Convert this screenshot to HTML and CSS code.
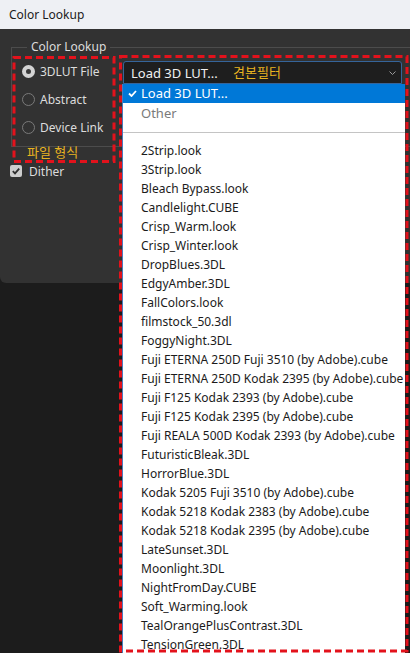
FILE: index.html
```html
<!DOCTYPE html>
<html lang="ko">
<head>
    <meta charset="UTF-8">
    <title>Color Lookup</title>
    <link rel="stylesheet" href="styles.css">
</head>
<body>
    <div class="titlebar">Color Lookup</div>

    <div class="dialog">
        <fieldset class="group">
            <legend>Color Lookup</legend>
            <div class="group-body">
                <div class="radios">
                    <label class="radio on"><span class="dot"></span>3DLUT File</label>
                    <label class="radio"><span class="dot"></span>Abstract</label>
                    <label class="radio"><span class="dot"></span>Device Link</label>
                </div>
                <div class="combo-wrap">
                    <div class="combo">
                        <span>Load 3D LUT...</span>
                        <svg class="chevron" width="7" height="4" viewBox="0 0 7 4"><polyline points="0.5,0.5 3.5,3.5 6.5,0.5" fill="none" stroke="#9a9a9a" stroke-width="1"/></svg>
                    </div>
                    <ul class="popup">
                        <li class="sel">
                            <svg class="tick" width="9" height="7" viewBox="0 0 9 7"><polyline points="1,3.5 3.5,6 8,1" fill="none" stroke="#fff" stroke-width="1.8"/></svg>
                            Load 3D LUT...
                        </li>
                        <li class="muted">Other</li>
                        <li class="sep"></li>
                        <li>2Strip.look</li>
                        <li>3Strip.look</li>
                        <li>Bleach Bypass.look</li>
                        <li>Candlelight.CUBE</li>
                        <li>Crisp_Warm.look</li>
                        <li>Crisp_Winter.look</li>
                        <li>DropBlues.3DL</li>
                        <li>EdgyAmber.3DL</li>
                        <li>FallColors.look</li>
                        <li>filmstock_50.3dl</li>
                        <li>FoggyNight.3DL</li>
                        <li>Fuji ETERNA 250D Fuji 3510 (by Adobe).cube</li>
                        <li>Fuji ETERNA 250D Kodak 2395 (by Adobe).cube</li>
                        <li>Fuji F125 Kodak 2393 (by Adobe).cube</li>
                        <li>Fuji F125 Kodak 2395 (by Adobe).cube</li>
                        <li>Fuji REALA 500D Kodak 2393 (by Adobe).cube</li>
                        <li>FuturisticBleak.3DL</li>
                        <li>HorrorBlue.3DL</li>
                        <li>Kodak 5205 Fuji 3510 (by Adobe).cube</li>
                        <li>Kodak 5218 Kodak 2383 (by Adobe).cube</li>
                        <li>Kodak 5218 Kodak 2395 (by Adobe).cube</li>
                        <li>LateSunset.3DL</li>
                        <li>Moonlight.3DL</li>
                        <li>NightFromDay.CUBE</li>
                        <li>Soft_Warming.look</li>
                        <li>TealOrangePlusContrast.3DL</li>
                        <li>TensionGreen.3DL</li>
                    </ul>
                </div>
            </div>
        </fieldset>

        <div class="check-row">
            <span class="checkbox"><svg width="12" height="12" viewBox="0 0 12 12"><polyline points="2.8,6.2 5,8.4 9.2,3.6" fill="none" stroke="#2e2e2e" stroke-width="1.8"/></svg></span>
            Dither
        </div>
    </div>

    <!-- 빨간 점선 표시 -->
    <svg class="marks" width="410" height="653" viewBox="0 0 410 653">
        <rect x="14" y="57.5" width="100" height="104" />
        <rect x="120.5" y="56.5" width="286.5" height="594.5" />
    </svg>
    <span class="note note-format">파일 형식</span>
    <span class="note note-filter">견본필터</span>
</body>
</html>
```

FILE: styles.css
```css
*{
    margin: 0;
    padding: 0;
    box-sizing: border-box;
}
body{
    position: relative;
    width: 410px;
    height: 653px;
    overflow: hidden;
    background: #1c1c1c;
    font-family: "Noto Sans", "Noto Sans CJK KR", sans-serif;
    font-size: 12px;
}
.titlebar{
    height: 29px;
    line-height: 29px;
    padding-left: 9px;
    background: #eef0f4;
    color: #1b1b1b;
}
.dialog{
    height: 254px;
    padding-top: 10px;
    background: #323232;
    border-bottom-left-radius: 6px;
    color: #dcdcdc;
}
.group{
    margin-left: 11px;
    border: 1px solid #4c4c4c;
    border-right: none;
    padding: 0 0 5px 0;
}
.group legend{
    margin-left: 15px;
    padding: 0 4px;
    line-height: 16px;
}
.group-body{
    display: flex;
    align-items: flex-start;
    padding-top: 2px;
}
.radios{
    width: 111px;
    padding-left: 10px;
}
.radio{
    display: flex;
    align-items: center;
    gap: 5px;
    height: 28px;
}
.radio .dot{
    width: 13px;
    height: 13px;
    border: 1px solid #7a7a7a;
    border-radius: 50%;
}
.radio.on .dot{
    border: 4px solid #d4d4d4;
    background: #3a3a3a;
}
.combo-wrap{
    position: relative;
    width: 279px;
    margin-top: 4px;
}
.combo{
    display: flex;
    align-items: center;
    justify-content: space-between;
    height: 23px;
    padding: 0 5px 0 7px;
    background: #1e1e1e;
    border: 1px solid #35649a;
    border-radius: 3px 3px 0 0;
    color: #f0f0f0;
    font-size: 13px;
}
.popup{
    position: absolute;
    top: 23px;
    left: -1px;
    width: 283px;
    height: 580px;
    list-style: none;
    background: #fff;
    border-left: 1px solid #4a7bbd;
    color: #1b1b1b;
}
.popup li{
    height: 19px;
    line-height: 19px;
    padding-left: 18px;
    white-space: nowrap;
}
.popup .sel{
    position: relative;
    background: #0078d7;
    color: #fff;
    font-size: 13px;
}
.popup .tick{
    position: absolute;
    left: 5px;
    top: 6px;
}
.popup .muted{
    height: 20px;
    line-height: 20px;
    color: #7a7a7a;
    font-size: 13px;
}
.popup .sep{
    height: 1px;
    margin: 9px 0 8px;
    background: #c4c4c4;
}
.check-row{
    display: flex;
    align-items: center;
    gap: 7px;
    height: 20px;
    margin-top: 14px;
    padding-left: 10px;
}
.checkbox{
    display: flex;
    width: 12px;
    height: 12px;
    border-radius: 2px;
    background: #cdcdcd;
}
.marks{
    position: absolute;
    left: 0;
    top: 0;
}
.marks rect{
    fill: none;
    stroke: #e3121c;
    stroke-width: 3;
    stroke-dasharray: 7 4;
}
.note{
    position: absolute;
    line-height: 16px;
    color: #e8b320;
    font-size: 13px;
}
.note-format{
    left: 27px;
    top: 144px;
}
.note-filter{
    left: 233px;
    top: 64px;
}
```
